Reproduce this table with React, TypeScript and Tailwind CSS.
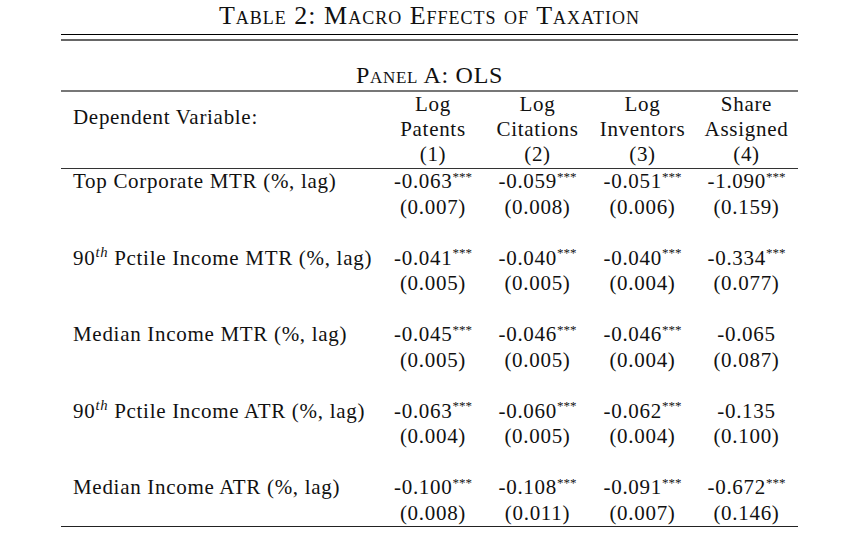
type Row = {
  label: React.ReactNode
  values: string[]
  stars: string[]
  errors: string[]
}

const rows: Row[] = [
  {
    label: 'Top Corporate MTR (%, lag)',
    values: ['-0.063', '-0.059', '-0.051', '-1.090'],
    stars: ['***', '***', '***', '***'],
    errors: ['(0.007)', '(0.008)', '(0.006)', '(0.159)'],
  },
  {
    label: (
      <>
        90<sup className="italic text-[0.7em]">th</sup> Pctile Income MTR (%, lag)
      </>
    ),
    values: ['-0.041', '-0.040', '-0.040', '-0.334'],
    stars: ['***', '***', '***', '***'],
    errors: ['(0.005)', '(0.005)', '(0.004)', '(0.077)'],
  },
  {
    label: 'Median Income MTR (%, lag)',
    values: ['-0.045', '-0.046', '-0.046', '-0.065'],
    stars: ['***', '***', '***', ''],
    errors: ['(0.005)', '(0.005)', '(0.004)', '(0.087)'],
  },
  {
    label: (
      <>
        90<sup className="italic text-[0.7em]">th</sup> Pctile Income ATR (%, lag)
      </>
    ),
    values: ['-0.063', '-0.060', '-0.062', '-0.135'],
    stars: ['***', '***', '***', ''],
    errors: ['(0.004)', '(0.005)', '(0.004)', '(0.100)'],
  },
  {
    label: 'Median Income ATR (%, lag)',
    values: ['-0.100', '-0.108', '-0.091', '-0.672'],
    stars: ['***', '***', '***', '***'],
    errors: ['(0.008)', '(0.011)', '(0.007)', '(0.146)'],
  },
]

const headers = [
  ['Log', 'Patents', '(1)'],
  ['Log', 'Citations', '(2)'],
  ['Log', 'Inventors', '(3)'],
  ['Share', 'Assigned', '(4)'],
]

const grid = 'grid grid-cols-[320px_104px_105px_105px_103px]'

export default function App() {
  return (
    <div className="w-[864px] h-[539px] bg-white text-[#111] font-['Liberation_Serif','Times_New_Roman',serif] text-[21px] tracking-[0.7px]">
      <div className="ml-[61px] w-[737px]">
        <h1 className="h-[34px] text-center text-[26px] tracking-[1px] leading-[32px] [font-variant:small-caps]">
          Table 2: Macro Effects of Taxation
        </h1>
        <div className="h-px bg-black" />
        <div className="mt-[4px] h-[2px] bg-[#666]" />

        <h2 className="mt-[20px] mb-[1px] text-center text-[24px] leading-[28px] [font-variant:small-caps]">
          Panel A: OLS
        </h2>
        <div className="h-[2px] bg-[#777]" />

        <div className={`${grid} auto-rows-[25px] leading-[25px]`}>
          <div className="row-span-2 flex items-center pl-3">Dependent Variable:</div>
          {headers.map((h, i) => (
            <div key={`a${i}`} className="text-center">{h[0]}</div>
          ))}
          {headers.map((h, i) => (
            <div key={`b${i}`} className="text-center">{h[1]}</div>
          ))}
          <div />
          {headers.map((h, i) => (
            <div key={`c${i}`} className="text-center">{h[2]}</div>
          ))}
        </div>
        <div className="mt-px h-px bg-[#333]" />

        <div className={`${grid} auto-rows-[25.5px] leading-[25.5px]`}>
          {rows.map((r, i) => (
            <div key={i} className="contents">
              <div className="pl-3 whitespace-nowrap">{r.label}</div>
              {r.values.map((v, j) => (
                <div key={j} className="text-center whitespace-nowrap">
                  {v}
                  {r.stars[j] && (
                    <sup className="text-[0.62em] tracking-normal -top-[0.55em]">{r.stars[j]}</sup>
                  )}
                </div>
              ))}
              <div />
              {r.errors.map((e, j) => (
                <div key={j} className="text-center">{e}</div>
              ))}
              {i < rows.length - 1 && <div className="col-span-5" />}
            </div>
          ))}
        </div>
        <div className="h-px bg-[#222]" />
      </div>
    </div>
  )
}
